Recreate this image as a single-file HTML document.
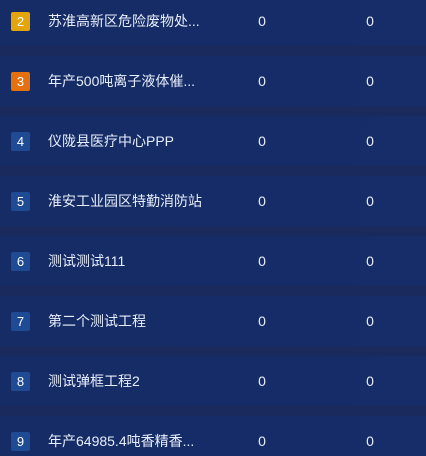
<!DOCTYPE html>
<html><head><meta charset="utf-8"><style>
html,body{margin:0;width:426px;height:456px;overflow:hidden;background:#1b2a5c;font-family:"Liberation Sans","Noto Sans CJK SC",sans-serif;}
body{position:relative;}
.r{position:absolute;left:0;width:426px;height:50px;background:linear-gradient(90deg,#162c66,#152c68 60%,#172d6a);}
.b{position:absolute;left:11px;top:16px;width:19px;height:19px;border-radius:2px;background:#1f4a94;color:#fff;font-size:13px;line-height:19px;text-align:center;}
.n{position:absolute;left:48px;top:0;line-height:50px;font-size:14px;color:#e8eefc;}
.v{position:absolute;top:0;line-height:50px;font-size:14px;color:#e8eefc;width:20px;text-align:center;}
</style></head><body>
<div class="r" style="top:-4px"><div class="b" style="background:#e4a40b">2</div><div class="n">苏淮高新区危险废物处...</div><div class="v" style="left:252px">0</div><div class="v" style="left:360px">0</div></div>
<div class="r" style="top:56px"><div class="b" style="background:#e6700d">3</div><div class="n">年产500吨离子液体催...</div><div class="v" style="left:252px">0</div><div class="v" style="left:360px">0</div></div>
<div class="r" style="top:116px"><div class="b">4</div><div class="n">仪陇县医疗中心PPP</div><div class="v" style="left:252px">0</div><div class="v" style="left:360px">0</div></div>
<div class="r" style="top:176px"><div class="b">5</div><div class="n">淮安工业园区特勤消防站</div><div class="v" style="left:252px">0</div><div class="v" style="left:360px">0</div></div>
<div class="r" style="top:236px"><div class="b">6</div><div class="n">测试测试111</div><div class="v" style="left:252px">0</div><div class="v" style="left:360px">0</div></div>
<div class="r" style="top:296px"><div class="b">7</div><div class="n">第二个测试工程</div><div class="v" style="left:252px">0</div><div class="v" style="left:360px">0</div></div>
<div class="r" style="top:356px"><div class="b">8</div><div class="n">测试弹框工程2</div><div class="v" style="left:252px">0</div><div class="v" style="left:360px">0</div></div>
<div class="r" style="top:416px"><div class="b">9</div><div class="n">年产64985.4吨香精香...</div><div class="v" style="left:252px">0</div><div class="v" style="left:360px">0</div></div>
</body></html>
